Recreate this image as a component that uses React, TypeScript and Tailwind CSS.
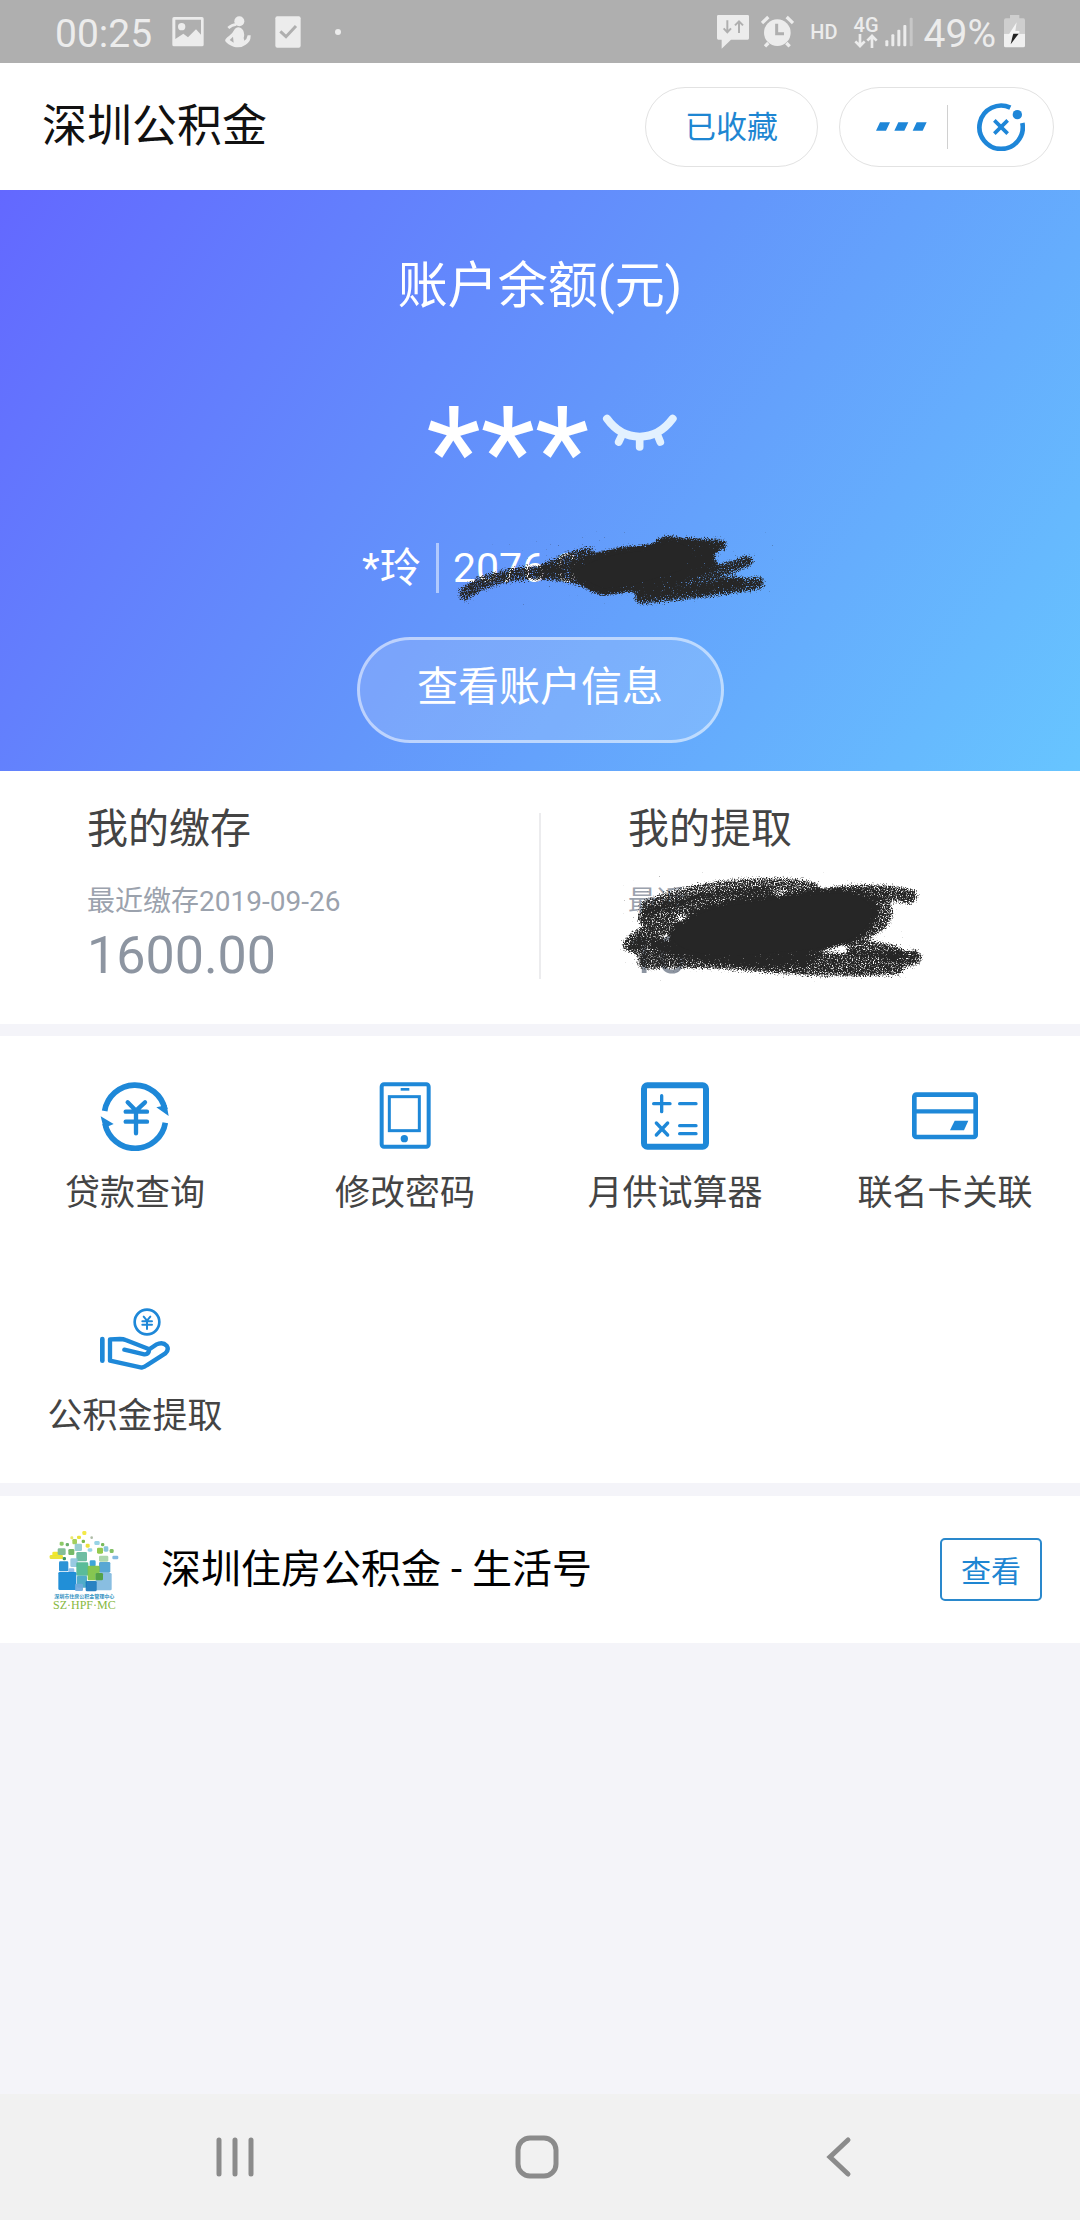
import type { ReactNode } from "react";

const FONT = "font-['Roboto','Noto_Sans_CJK_SC',sans-serif]";

function StatusBar() {
  return (
    <div className="flex h-[63px] shrink-0 items-center justify-between bg-[#afafaf] pl-[55px] pr-[55px] text-[#ececec]">
      <div className="flex items-center">
        <span className="pt-[6px] text-[39px] leading-none">00:25</span>
        <svg className="ml-[20px] h-[30px] w-[32px]" viewBox="0 0 96 90" fill="currentColor">
          <path fillRule="evenodd" d="M6 0h84q5 0 5 5v78q0 5-5 5H6q-5 0-5-5V5q0-5 5-5zM10 8v58l24-16 14 11 24-24 15 16V8zM29 18a11 11 0 1 1 0 22a11 11 0 1 1 0-22z" />
        </svg>
        <svg className="ml-[21px] h-[32px] w-[26px]" viewBox="0 0 78 96" fill="currentColor">
          <circle cx="43" cy="16" r="15" />
          <path d="M30 38Q44 28 54 42Q60 54 56 66L58 74Q66 70 68 58H77Q78 78 62 86Q46 98 26 92Q8 86 1 76Q-2 70 12 60Q24 50 30 38zM24 62L14 72L26 80z" fillRule="evenodd" />
          <path d="M10 36Q20 26 34 25" fill="none" stroke="currentColor" strokeWidth="8" />
        </svg>
        <svg className="ml-[24px] h-[32px] w-[26px]" viewBox="0 0 78 96">
          <rect x="1" y="1" width="76" height="94" rx="6" fill="currentColor" />
          <path d="M16 46l17 16 30-32" fill="none" stroke="#afafaf" strokeWidth="9" />
        </svg>
        <svg className="ml-[33px] h-[8px] w-[8px]" viewBox="0 0 8 8" fill="currentColor">
          <circle cx="4" cy="4" r="3" />
        </svg>
      </div>
      <div className="flex items-center">
        <svg className="h-[34px] w-[32px]" viewBox="0 0 96 102">
          <path d="M4 0h88q4 0 4 4v66q0 4-4 4H42L14 101V74H4q-4 0-4-4V4q0-4 4-4z" fill="currentColor" />
          <path d="M31 16v34M20 40l11 12 11-12M66 54V20M54 31l12-12 12 12" fill="none" stroke="#afafaf" strokeWidth="6" />
        </svg>
        <svg className="ml-[12px] h-[33px] w-[33px]" viewBox="0 0 99 99" fill="none" stroke="currentColor">
          <circle cx="49" cy="53" r="40" fill="currentColor" stroke="none" />
          <path d="M3 24L22 6M96 24L77 6M22 84L12 94M76 84l10 10" strokeWidth="10" />
          <path d="M47 26v30h22" stroke="#afafaf" strokeWidth="9" />
        </svg>
        <span className="ml-[16px] text-[20px] font-medium leading-none">HD</span>
        <div className="ml-[16px] flex flex-col items-center">
          <span className="text-[20px] font-medium leading-[18px]">4G</span>
          <svg className="h-[14px] w-[24px]" viewBox="0 0 72 42" fill="none" stroke="currentColor" strokeWidth="8">
            <path d="M18 0v34M4 22l14 14 14-14M54 42V6M40 20L54 6l14 14" />
          </svg>
        </div>
        <svg className="ml-[6px] h-[30px] w-[29px]" viewBox="0 0 87 90" fill="currentColor">
          <rect x="1" y="70" width="9" height="18" rx="3" />
          <rect x="19" y="52" width="9" height="36" rx="3" />
          <rect x="37" y="38" width="9" height="50" rx="3" />
          <rect x="55" y="24" width="9" height="64" rx="3" />
          <rect x="74" y="2" width="9" height="86" rx="3" opacity="0.4" />
        </svg>
        <span className="ml-[10px] pt-[6px] text-[39px] leading-none">49%</span>
        <svg className="ml-[8px] h-[33px] w-[21px]" viewBox="0 0 63 99">
          <path d="M18 0h28v10h12q5 0 5 6v40H0V16q0-6 6-6h12z" fill="#cecece" />
          <path d="M0 56h63v36q0 5-5 5H5q-5 0-5-5z" fill="#f0f0f0" />
          <path d="M38 22L12 62h16l14-6h4V48H34z" fill="#f4f4f4" />
          <path d="M28 56h16L20 88l6-26z" fill="#222" />
        </svg>
      </div>
    </div>
  );
}

function TitleBar() {
  return (
    <header className="flex h-[127px] shrink-0 items-center bg-white pl-[42px] pr-[26px]">
      <h1 className="flex-1 text-[45px] leading-[60px] text-[#111]">深圳公积金</h1>
      <button className="h-[80px] w-[173px] rounded-full border border-[#e2e2e2] pt-[3px] text-[31px] text-[#1e86d2]">
        已收藏
      </button>
      <div className="ml-[21px] flex h-[80px] w-[215px] items-center rounded-full border border-[#e2e2e2]">
        <button aria-label="更多" className="flex h-full w-[107px] items-center justify-end pr-[20px]">
          <svg className="h-[9px] w-[51px]" viewBox="0 0 153 27" fill="#1e86d8">
            <path d="M12 1h30L30 26H0zM67 1h30L85 26H55zM122 1h30l-12 25h-30z" />
          </svg>
        </button>
        <span className="h-[44px] w-px bg-[#d0d0d0]" />
        <button aria-label="关闭" className="flex h-full flex-1 items-center justify-center">
          <svg className="h-[48px] w-[48px]" viewBox="0 0 144 144" fill="none" stroke="#1e86d8">
            <path d="M100 14A65 65 0 1 0 136 60" strokeWidth="14" />
            <circle cx="121" cy="35" r="14" fill="#1e86d8" stroke="none" />
            <path d="M52 52l40 40M92 52L52 92" strokeWidth="11" />
          </svg>
        </button>
      </div>
    </header>
  );
}

function CharcoalFilter() {
  return (
    <svg className="absolute h-0 w-0" aria-hidden="true">
      <filter id="charcoal" x="-5%" y="-15%" width="110%" height="130%" colorInterpolationFilters="sRGB">
        <feGaussianBlur in="SourceAlpha" stdDeviation="6" result="soft" />
        <feTurbulence type="fractalNoise" baseFrequency="0.26" numOctaves="2" seed="4" result="noise" />
        <feComposite in="soft" in2="noise" operator="arithmetic" k1="0" k2="1" k3="1.3" k4="-1.05" result="mix" />
        <feComponentTransfer in="mix" result="grain">
          <feFuncA type="linear" slope="3.2" intercept="0" />
        </feComponentTransfer>
        <feFlood floodColor="#262626" />
        <feComposite in2="grain" operator="in" />
      </filter>
    </svg>
  );
}

function ScribbleAccount() {
  return (
    <svg
      className="pointer-events-none absolute left-[12px] top-[-16px] h-[90px] w-[330px]"
      viewBox="330 50 990 270"
      aria-hidden="true"
    >
      <g filter="url(#charcoal)" fill="none" stroke="#262626" strokeLinecap="round" strokeLinejoin="round">
        <path d="M372 250Q430 200 560 188Q640 186 720 205" strokeWidth="46" opacity="0.72" />
        <path d="M610 180Q680 145 740 130M900 262Q1080 245 1250 218" strokeWidth="46" opacity="0.74" />
        <path d="M900 240Q1060 235 1190 215M1020 200Q1130 190 1220 152M960 100L1140 104" strokeWidth="40" opacity="0.76" />
        <path d="M700 175Q780 128 870 122T980 90Q1040 100 1120 112Q1100 150 1060 185Q980 210 900 225T780 240Q720 220 700 175z" fill="#262626" strokeWidth="30" />
        <path d="M840 215Q1000 200 1110 160" strokeWidth="40" opacity="0.9" />
      </g>
      <path d="M710 178Q780 134 870 126T980 92Q1030 100 1060 120Q1050 150 1020 180Q960 200 900 216T790 234Q730 215 710 178z" fill="#262626" />
    </svg>
  );
}

function ScribbleWithdraw() {
  return (
    <svg
      className="pointer-events-none absolute left-[-10px] top-[-11px] h-[112px] w-[312px]"
      viewBox="174 274 936 336"
      aria-hidden="true"
    >
      <g filter="url(#charcoal)" fill="none" stroke="#262626" strokeLinecap="round" strokeLinejoin="round">
        <path d="M262 380Q400 325 560 318T760 330" strokeWidth="48" opacity="0.68" />
        <path d="M256 415Q420 360 620 350M780 350Q920 325 1050 350M210 495Q250 450 340 440" strokeWidth="50" opacity="0.74" />
        <path d="M800 372Q900 350 975 385Q990 440 880 470M880 505Q960 500 1010 520" strokeWidth="46" opacity="0.7" />
        <path d="M255 545Q420 535 620 555T1010 562M240 505Q500 530 760 540T1062 533" strokeWidth="52" opacity="0.74" />
        <path d="M345 465Q400 400 500 385T760 352T935 400Q920 450 860 475T640 510Q500 530 420 515T345 465z" fill="#262626" strokeWidth="34" />
        <path d="M290 490Q420 530 560 540T760 530" strokeWidth="36" opacity="0.9" />
      </g>
      <path d="M335 465Q400 395 500 380T760 345T940 400Q920 455 860 482T640 518Q500 536 420 520T335 465z" fill="#262626" />
    </svg>
  );
}

function Hero() {
  return (
    <section className="flex flex-col items-center bg-[linear-gradient(125deg,#6368ff_0%,#6396fb_50%,#67c5ff_100%)] pb-[28px] pt-[66px] text-white">
      <h2 className="text-[50px] leading-[60px]">账户余额(元)</h2>
      <div className="mt-[62px] flex h-[100px] items-start gap-[13px] pl-[25px]">
        <span className="pt-[25px] text-[126px] leading-[100px]">***</span>
        <button aria-label="显示余额" className="mt-[35px]">
          <svg className="h-[39px] w-[76px]" viewBox="784 550 228 117" fill="none" stroke="#e2f1ff" strokeLinecap="round">
            <path d="M799 567Q838 621 897 621T996 567" strokeWidth="24" />
            <path d="M842 620l-8 17M897 630v22M952 620l7 17" strokeWidth="23" />
          </svg>
        </button>
      </div>
      <div className="mt-[65px] flex h-[50px] items-center text-[41px] leading-[50px]">
        <span className="w-[74px]">*玲</span>
        <span className="h-[50px] w-[3px] bg-white/50" />
        <div className="relative w-[279px] pl-[14px]">
          2076 0
          <ScribbleAccount />
        </div>
      </div>
      <button className="mt-[44px] h-[106px] w-[367px] rounded-full border-[3px] border-white/50 bg-white/15 pb-[6px] text-[41px] leading-[50px]">
        查看账户信息
      </button>
    </section>
  );
}

function Summary() {
  return (
    <section className="flex bg-white pb-[38px] pt-[33px] text-[#8d95a1]">
      <div className="flex-1 pl-[87px]">
        <h3 className="text-[41px] leading-[50px] text-[#444]">我的缴存</h3>
        <p className="mt-[28px] text-[28px] leading-[40px] text-[#9ba2ad]">最近缴存2019-09-26</p>
        <p className="mt-[4px] text-[52px] leading-[60px]">1600.00</p>
      </div>
      <span className="mt-[9px] h-[166px] w-[2px] bg-[#ececee]" />
      <div className="flex-1 pl-[87px]">
        <h3 className="text-[41px] leading-[50px] text-[#444]">我的提取</h3>
        <div className="relative mt-[28px]">
          <p className="text-[28px] leading-[40px] text-[#9ba2ad]">最近</p>
          <p className="mt-[4px] text-[52px] leading-[60px]">10</p>
          <ScribbleWithdraw />
        </div>
      </div>
    </section>
  );
}

function LoanIcon() {
  return (
    <svg className="h-[70px] w-[70px]" viewBox="181 62 210 210" fill="none" stroke="#1e88d8">
      <path d="M195 152A92 92 0 0 1 376 148M377 187A92 92 0 0 1 196 190" strokeWidth="17" />
      <path d="M350 141L381 134L387 167zM183 168L222 191L192 204z" fill="#1e88d8" stroke="none" />
      <path d="M264 126l25 25 27-25M258 154h64M258 184h64M289 154v65" strokeWidth="13" strokeLinecap="round" />
    </svg>
  );
}

function PhoneIcon() {
  return (
    <svg className="h-[70px] w-[70px]" viewBox="994 62 210 210" fill="none" stroke="#1e88d8">
      <rect x="1029" y="72" width="141" height="187" rx="7" strokeWidth="12" />
      <rect x="1052" y="109" width="90" height="102" strokeWidth="9" />
      <path d="M1086 87h26" strokeWidth="8" />
      <circle cx="1097" cy="235" r="11" fill="#1e88d8" stroke="none" />
    </svg>
  );
}

function CalculatorIcon() {
  return (
    <svg className="h-[70px] w-[70px]" viewBox="243 62 210 210" fill="none" stroke="#1e88d8">
      <rect x="255" y="75" width="186" height="184" rx="10" strokeWidth="18" />
      <path d="M284 130h49M308 106v48M362 130h49M292 188l34 36M326 188l-34 36M362 196h49M362 220h49" strokeWidth="10" strokeLinecap="round" />
    </svg>
  );
}

function CardIcon() {
  return (
    <svg className="h-[70px] w-[70px]" viewBox="1053 62 210 210" fill="none" stroke="#1e88d8">
      <rect x="1066" y="103" width="184" height="127" rx="6" strokeWidth="14" />
      <path d="M1066 153h184" strokeWidth="13" />
      <path d="M1187 181h41l-13 29h-42z" fill="#1e88d8" stroke="none" />
    </svg>
  );
}

function HandIcon() {
  return (
    <svg className="h-[70px] w-[72px]" viewBox="207 66 216 210" fill="none" stroke="#1e88d8" strokeLinecap="round" strokeLinejoin="round">
      <circle cx="351" cy="120" r="37" strokeWidth="8" />
      <path d="M341 104l10 12 10-12M337 118h29M337 128h29M351 117v24" strokeWidth="6" />
      <path d="M217 171v65" strokeWidth="14" />
      <path d="M283 203L343 217Q356 218 358 202L287 174Q280 171 270 171L240 172V236L335 257Q345 255 350 250L406 214Q418 203 410 191Q398 178 378 188L358 202" strokeWidth="13" />
    </svg>
  );
}

const MENU: { label: string; icon: ReactNode }[] = [
  { label: "贷款查询", icon: <LoanIcon /> },
  { label: "修改密码", icon: <PhoneIcon /> },
  { label: "月供试算器", icon: <CalculatorIcon /> },
  { label: "联名卡关联", icon: <CardIcon /> },
  { label: "公积金提取", icon: <HandIcon /> },
];

function Menu() {
  return (
    <nav className="mt-[12px] grid grid-cols-4 gap-y-[80px] bg-white pb-[36px] pt-[45px]">
      {MENU.map((item) => (
        <button key={item.label} className="flex flex-col items-center gap-[13px]">
          {item.icon}
          <span className="text-[35px] leading-[60px] text-[#444]">{item.label}</span>
        </button>
      ))}
    </nav>
  );
}

const LOGO_BLOCKS: [number, number, number, number, string][] = [
  [138, 125, 32, 28, "#63b99b"],
  [120, 144, 22, 26, "#8fc4e0"],
  [86, 153, 28, 30, "#1b8ad2"],
  [138, 156, 36, 40, "#4cb690"],
  [178, 150, 18, 18, "#2f9ed6"],
  [206, 155, 34, 32, "#4a9fd0"],
  [206, 136, 28, 18, "#a5d3a6"],
  [114, 174, 18, 14, "#8bb9e8"],
  [84, 185, 54, 54, "#0e86d4"],
  [140, 196, 30, 36, "#42a5c4"],
  [172, 166, 36, 44, "#7cc142"],
  [196, 188, 48, 52, "#7fb9de"],
  [196, 188, 22, 22, "#4f9f3c"],
  [166, 212, 33, 31, "#1877bd"],
  [134, 220, 24, 22, "#6fa9dc"],
  [58, 134, 40, 12, "#e8e22a"],
  [66, 124, 18, 12, "#f0e61c"],
  [82, 114, 24, 20, "#79b98e"],
  [114, 116, 18, 18, "#6bb35c"],
  [88, 94, 12, 12, "#83c45a"],
  [106, 98, 10, 10, "#5fa862"],
  [126, 86, 14, 16, "#9ccb4e"],
  [140, 76, 12, 10, "#e6df2a"],
  [156, 62, 12, 12, "#f2e73a"],
  [120, 78, 9, 9, "#e8e65a"],
  [133, 100, 22, 22, "#8fc9cf"],
  [154, 88, 10, 10, "#6fb33c"],
  [166, 100, 12, 12, "#e9e02c"],
  [180, 78, 8, 8, "#a7b6a0"],
  [192, 92, 16, 12, "#8fd0e4"],
  [212, 98, 10, 10, "#6db44e"],
  [200, 112, 18, 18, "#8cc63f"],
  [220, 108, 14, 16, "#7dc0d8"],
  [238, 116, 12, 12, "#78bc5a"],
  [172, 114, 14, 10, "#8fd0e4"],
  [246, 136, 18, 11, "#7ab4e0"],
  [97, 140, 10, 10, "#2f8b57"],
];

function Logo() {
  return (
    <svg className="h-[85px] w-[75px]" viewBox="50 50 225 255" aria-hidden="true">
      {LOGO_BLOCKS.map(([x, y, w, h, color], i) => (
        <rect key={i} x={x} y={y} width={w} height={h} rx="4" fill={color} opacity="0.92" />
      ))}
      <text x="162" y="264" textAnchor="middle" fontSize="15" fontWeight="700" fill="#2c8fc0" fontFamily="Noto Sans CJK SC, sans-serif">
        深圳市住房公积金管理中心
      </text>
      <text x="162" y="297" textAnchor="middle" fontSize="36" fill="#86b83e" fontFamily="Liberation Serif, serif">
        SZ·HPF·MC
      </text>
    </svg>
  );
}

function LifeAccount() {
  return (
    <section className="mt-[13px] flex h-[147px] items-center bg-white pl-[47px] pr-[38px]">
      <Logo />
      <h3 className="ml-[39px] flex-1 text-[40px] leading-[60px] text-black">深圳住房公积金 - 生活号</h3>
      <button className="h-[63px] w-[102px] rounded-[5px] border-2 border-[#2a88cc] pt-[4px] text-[30px] leading-[40px] text-[#1e86d2]">
        查看
      </button>
    </section>
  );
}

function SystemNav() {
  return (
    <footer className="mt-auto grid h-[126px] shrink-0 grid-cols-3 items-center justify-items-center bg-[#f1f1f1] pl-[84px] pr-[90px]">
      <button aria-label="最近任务">
        <svg className="h-[42px] w-[40px]" viewBox="0 0 40 42" stroke="#8b8b8b" strokeWidth="5" strokeLinecap="round">
          <path d="M4 4v34M20 4v34M36 4v34" />
        </svg>
      </button>
      <button aria-label="主屏幕">
        <svg className="h-[44px] w-[44px]" viewBox="0 0 44 44" fill="none" stroke="#8b8b8b" strokeWidth="5">
          <rect x="3" y="3" width="38" height="38" rx="12" />
        </svg>
      </button>
      <button aria-label="返回">
        <svg className="h-[42px] w-[26px]" viewBox="0 0 26 42" fill="none" stroke="#8b8b8b" strokeWidth="5" strokeLinecap="round">
          <path d="M22 4L4 21l18 17" />
        </svg>
      </button>
    </footer>
  );
}

export default function App() {
  return (
    <div className={`flex min-h-screen flex-col bg-[#f4f4f9] ${FONT}`}>
      <CharcoalFilter />
      <StatusBar />
      <TitleBar />
      <main>
        <Hero />
        <Summary />
        <Menu />
        <LifeAccount />
      </main>
      <SystemNav />
    </div>
  );
}
